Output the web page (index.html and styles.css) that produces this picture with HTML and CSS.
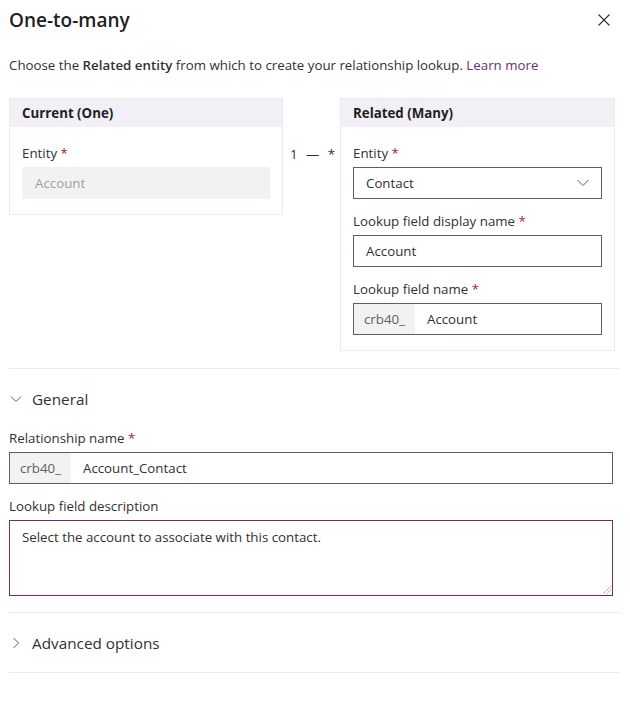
FILE: index.html
```html
<!DOCTYPE html>
<html>
<head>
<meta charset="utf-8">
<link rel="stylesheet" href="styles.css">
</head>
<body>
<div class="panel">
  <header class="head">
    <h1 class="title">One-to-many</h1>
    <button class="close" aria-label="Close">
      <svg width="12" height="12" viewBox="0 0 12 12"><path d="M0.5 0.5 L11.5 11.5 M11.5 0.5 L0.5 11.5" stroke="#323130" stroke-width="1.1" fill="none"/></svg>
    </button>
  </header>
  <p class="intro">Choose the <b>Related entity</b> from which to create your relationship lookup. <a class="link">Learn more</a></p>

  <div class="cards">
    <section class="card">
      <div class="card-head">Current (One)</div>
      <div class="card-body">
        <div class="field">
          <label class="label">Entity <span class="req">*</span></label>
          <div class="input disabled">Account</div>
        </div>
      </div>
    </section>
    <div class="connector">1 — *</div>
    <section class="card">
      <div class="card-head">Related (Many)</div>
      <div class="card-body">
        <div class="field">
          <label class="label">Entity <span class="req">*</span></label>
          <div class="input select">
            <span>Contact</span>
            <svg class="chev" width="12" height="8" viewBox="0 0 12 8"><path d="M0.5 1 L6 6.5 L11.5 1" stroke="#605e5c" stroke-width="1" fill="none"/></svg>
          </div>
        </div>
        <div class="field">
          <label class="label">Lookup field display name <span class="req">*</span></label>
          <div class="input">Account</div>
        </div>
        <div class="field">
          <label class="label">Lookup field name <span class="req">*</span></label>
          <div class="input prefixed"><span class="prefix">crb40_</span><span class="val">Account</span></div>
        </div>
      </div>
    </section>
  </div>

  <hr class="divider first">

  <div class="section-toggle">
    <svg class="toggle-icon" width="12" height="12" viewBox="0 0 12 12"><path d="M1 3.5 L6 8.5 L11 3.5" stroke="#605e5c" stroke-width="1" fill="none"/></svg>
    <span>General</span>
  </div>

  <div class="field wide">
    <label class="label">Relationship name <span class="req">*</span></label>
    <div class="input prefixed"><span class="prefix">crb40_</span><span class="val">Account_Contact</span></div>
  </div>
  <div class="field wide">
    <label class="label">Lookup field description</label>
    <div class="textarea">Select the account to associate with this contact.
      <svg class="grip" width="8" height="8" viewBox="0 0 8 8"><path d="M7.5 0.5 L0.5 7.5 M7.5 4 L4 7.5" stroke="#605e5c" stroke-width="1" stroke-dasharray="1 1" fill="none"/></svg>
    </div>
  </div>

  <hr class="divider">

  <div class="section-toggle">
    <svg class="toggle-icon" width="12" height="12" viewBox="0 0 12 12"><path d="M3.5 1 L8.5 6 L3.5 11" stroke="#605e5c" stroke-width="1" fill="none"/></svg>
    <span>Advanced options</span>
  </div>

  <hr class="divider">
</div>
</body>
</html>
```

FILE: styles.css
```css
* { box-sizing: border-box; }
html, body { margin: 0; background: #fff; }
body {
  font-family: "Open Sans", "Noto Sans", sans-serif;
  font-size: 13.3px;
  color: #323130;
}
.panel { padding: 0 10px 0 9px; width: 630px; }
.head {
  display: flex;
  align-items: center;
  justify-content: space-between;
  height: 40px;
}
.title {
  margin: 0;
  font-size: 19px;
  font-weight: 600;
  color: #201f1e;
}
.close {
  border: 0;
  background: none;
  padding: 0;
  margin-right: 10px;
  width: 12px;
  height: 12px;
  display: flex;
}
.intro {
  margin: 0;
  padding-top: 15px;
  line-height: 20px;
  height: 58px;
}
.intro b { font-weight: 600; }
.link { color: #6b2e78; }

.cards {
  display: grid;
  grid-template-columns: 274px 57px 275px;
  align-items: start;
}
.card { border: 1px solid #edebe9; }
.card-head {
  height: 28px;
  background: #f3eff6;
  padding: 0 12px;
  line-height: 28px;
  font-weight: 700;
  color: #201f1e;
}
.card-body { padding: 16px 12px 15px; }
.field + .field { margin-top: 12px; }
.label {
  display: block;
  line-height: 20px;
  margin-bottom: 4px;
  color: #323130;
}
.req { color: #a4262c; }
.input {
  height: 32px;
  border: 1px solid #605e5c;
  display: flex;
  align-items: center;
  padding: 0 12px;
  color: #323130;
}
.input.disabled {
  background: #f3f2f1;
  border-color: #f3f2f1;
  color: #a19f9d;
}
.select { justify-content: space-between; }
.prefixed { padding: 0; }
.prefix {
  background: #f3f2f1;
  color: #605e5c;
  align-self: stretch;
  display: flex;
  align-items: center;
  padding: 0 10px;
}
.val { padding-left: 12px; }
.connector {
  padding-top: 46px;
  padding-left: 2px;
  line-height: 20px;
  text-align: center;
  color: #323130;
  white-space: pre;
  word-spacing: 5px;
}
.divider {
  border: 0;
  border-top: 1px solid #edebe9;
  margin: 0;
  height: 0;
}
.divider.first { margin-top: 17px; }
.section-toggle {
  display: flex;
  align-items: center;
  height: 59px;
  font-size: 15.3px;
  color: #323130;
}
.toggle-icon { margin: 0 10px 0 1px; }
.wide { margin-right: 7px; }
.section-toggle + .field { margin-top: 0; }
.textarea {
  position: relative;
  height: 76px;
  border: 1px solid #742774;
  padding: 6px 12px;
  line-height: 20px;
}
.grip { position: absolute; right: 1px; bottom: 1px; }
.wide + hr.divider { margin-top: 16px; }
```
